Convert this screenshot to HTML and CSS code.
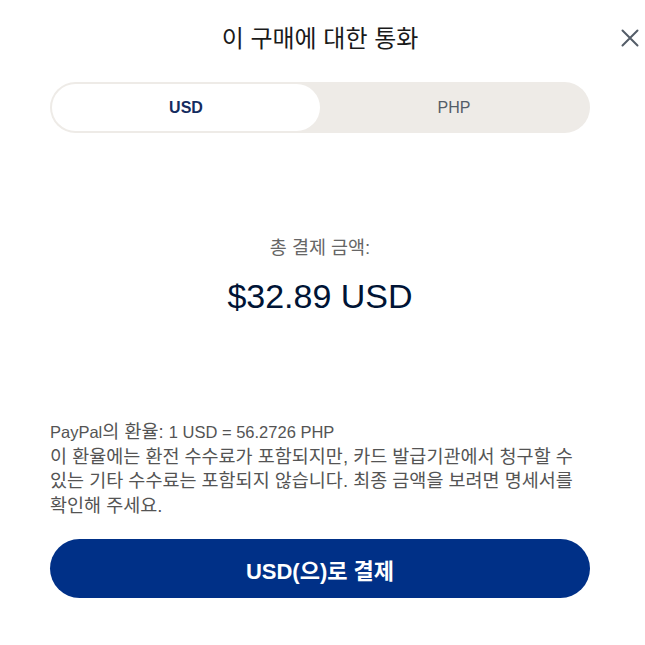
FILE: index.html
```html
<!DOCTYPE html>
<html lang="ko">
<head>
  <meta charset="UTF-8" />
  <title>이 구매에 대한 통화</title>
  <link rel="stylesheet" href="styles.css">
</head>
<body>
  <div class="sheet">
    <header class="sheet-header">
      <h1>이 구매에 대한 통화</h1>
      <button class="close-btn" aria-label="닫기">
        <svg width="18" height="18" viewBox="0 0 18 18">
          <path d="M1.5 1.5 L16.5 16.5 M16.5 1.5 L1.5 16.5" stroke="#545d68" stroke-width="2" stroke-linecap="round" fill="none"/>
        </svg>
      </button>
    </header>

    <div class="currency-toggle">
      <button class="toggle-option active">USD</button>
      <button class="toggle-option">PHP</button>
    </div>

    <div class="summary">
      <p class="summary-label">총 결제 금액:</p>
      <p class="summary-amount">$32.89 USD</p>
    </div>

    <div class="rate-note">
      <p><span class="latin">PayPal</span>의 환율: <span class="latin">1 USD = 56.2726 PHP</span></p>
      <p>이 환율에는 환전 수수료가 포함되지만, 카드 발급기관에서 청구할 수 있는 기타 수수료는 포함되지 않습니다. 최종 금액을 보려면 명세서를 확인해 주세요.</p>
    </div>

    <button class="pay-btn">USD(으)로 결제</button>
  </div>
</body>
</html>
```

FILE: styles.css
```css
*, *::before, *::after {
  box-sizing: border-box;
  margin: 0;
  padding: 0;
}
body {
  font-family: 'Liberation Sans', 'Noto Sans CJK KR', sans-serif;
  background: #ffffff;
  color: #001435;
}
.sheet {
  width: 645px;
  padding: 0 55px 0 50px;
}
.sheet-header {
  position: relative;
  height: 72px;
  display: flex;
  align-items: center;
  justify-content: center;
}
.sheet-header h1 {
  font-size: 24px;
  font-weight: 400;
  color: #1a1a1a;
}
.close-btn {
  position: absolute;
  right: -50px;
  top: 28px;
  width: 20px;
  height: 20px;
  border: none;
  background: none;
  display: flex;
  align-items: center;
  justify-content: center;
  cursor: pointer;
}
.currency-toggle {
  margin-top: 10px;
  height: 51px;
  padding: 2px;
  border-radius: 26px;
  background: #eeebe7;
  display: grid;
  grid-template-columns: 1fr 1fr;
}
.toggle-option {
  border: none;
  background: none;
  border-radius: 24px;
  font-family: inherit;
  font-size: 16px;
  color: #545d68;
  cursor: pointer;
}
.toggle-option.active {
  background: #ffffff;
  color: #142c5f;
  font-weight: 700;
}
.summary {
  margin-top: 103px;
  text-align: center;
}
.summary-label {
  font-size: 18.5px;
  line-height: 24px;
  color: #666666;
}
.summary-amount {
  margin-top: 16px;
  font-size: 34px;
  line-height: 40px;
  color: #001435;
}
.rate-note {
  margin-top: 104px;
  font-size: 18.5px;
  line-height: 24.5px;
  color: #545454;
}
.rate-note .latin {
  font-size: 16.5px;
}
.pay-btn {
  display: block;
  width: 100%;
  margin-top: 21px;
  height: 59px;
  border: none;
  border-radius: 30px;
  background: #003087;
  color: #ffffff;
  font-family: inherit;
  font-size: 22px;
  font-weight: 700;
  cursor: pointer;
}
```
